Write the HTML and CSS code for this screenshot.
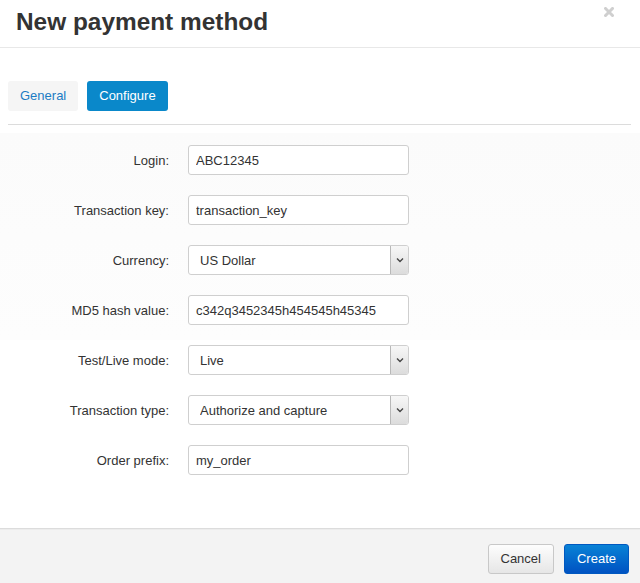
FILE: index.html
```html
<!DOCTYPE html>
<html lang="en">
<head>
<meta charset="utf-8">
<title>New payment method</title>
<link rel="stylesheet" href="styles.css">
</head>
<body>
<div class="modal">
  <div class="modal-header">
    <h1 class="modal-title">New payment method</h1>
    <span class="close" aria-label="Close">
      <svg width="10" height="10" viewBox="0 0 10 10"><path d="M1.5 1.5 L8.5 8.5 M8.5 1.5 L1.5 8.5" stroke="#cfcfcf" stroke-width="3" stroke-linecap="square"/></svg>
    </span>
  </div>
  <div class="modal-body">
    <div class="tabs">
      <button class="tab">General</button>
      <button class="tab tab-active">Configure</button>
    </div>
    <form class="form">
      <label class="label" for="f-login">Login:</label>
      <input class="input" id="f-login" type="text" value="ABC12345">

      <label class="label" for="f-key">Transaction key:</label>
      <input class="input" id="f-key" type="text" value="transaction_key">

      <label class="label" for="f-cur">Currency:</label>
      <div class="select">
        <select id="f-cur"><option>US Dollar</option></select>
        <span class="select-arrow"><svg width="8" height="6" viewBox="0 0 8 6"><path d="M1 1.5 L4 4.5 L7 1.5" fill="none" stroke="#444" stroke-width="1.4"/></svg></span>
      </div>

      <label class="label" for="f-md5">MD5 hash value:</label>
      <input class="input" id="f-md5" type="text" value="c342q3452345h454545h45345">

      <label class="label" for="f-mode">Test/Live mode:</label>
      <div class="select">
        <select id="f-mode"><option>Live</option></select>
        <span class="select-arrow"><svg width="8" height="6" viewBox="0 0 8 6"><path d="M1 1.5 L4 4.5 L7 1.5" fill="none" stroke="#444" stroke-width="1.4"/></svg></span>
      </div>

      <label class="label" for="f-type">Transaction type:</label>
      <div class="select">
        <select id="f-type"><option>Authorize and capture</option></select>
        <span class="select-arrow"><svg width="8" height="6" viewBox="0 0 8 6"><path d="M1 1.5 L4 4.5 L7 1.5" fill="none" stroke="#444" stroke-width="1.4"/></svg></span>
      </div>

      <label class="label" for="f-prefix">Order prefix:</label>
      <input class="input" id="f-prefix" type="text" value="my_order">
    </form>
  </div>
  <div class="modal-footer">
    <button class="btn btn-default">Cancel</button>
    <button class="btn btn-primary">Create</button>
  </div>
</div>
</body>
</html>
```

FILE: styles.css
```css
* { box-sizing: border-box; }
html, body {
  margin: 0;
  padding: 0;
  background: #fff;
  font-family: "Liberation Sans", Arial, sans-serif;
  color: #333;
}
.modal {
  width: 640px;
  height: 583px;
  display: flex;
  flex-direction: column;
  background: #fff;
}
.modal-header {
  position: relative;
  height: 48px;
  border-bottom: 1px solid #e8e8e8;
  padding: 0 16px;
}
.modal-title {
  margin: 0;
  padding-top: 8px;
  font-size: 24.4px;
  line-height: 28px;
  font-weight: bold;
  color: #333;
}
.close {
  position: absolute;
  top: 7px;
  right: 26px;
  width: 10px;
  height: 10px;
  display: block;
}
.close svg { display: block; }
.modal-body {
  flex: 1;
  padding-top: 33px;
}
.tabs {
  display: flex;
  gap: 9px;
  margin: 0 9px 0 8px;
  padding-bottom: 13px;
  border-bottom: 1px solid #dcdcdc;
}
.tab {
  height: 30px;
  padding: 0 12px;
  border: 0;
  border-radius: 3px;
  background: #f5f5f5;
  color: #1c7cc4;
  font-family: inherit;
  font-size: 13px;
  line-height: 30px;
}
.tab-active {
  background: #0a88ca;
  color: #fff;
}
.form {
  display: grid;
  grid-template-columns: 169px 221px;
  column-gap: 19px;
  row-gap: 20px;
  padding-top: 20px;
  align-items: center;
  background: linear-gradient(to bottom, #fff 0, #fff 8px, #fbfbfb 8px, #fdfdfd 215px, #fff 215px);
}
.label {
  text-align: right;
  font-size: 13px;
  color: #333;
}
.input, .select select {
  height: 30px;
  width: 221px;
  border: 1px solid #cfcfcf;
  border-radius: 3px;
  background: #fff;
  font-family: inherit;
  font-size: 13px;
  color: #333;
  padding: 0 7px;
  margin: 0;
  outline: none;
}
.select {
  position: relative;
  width: 221px;
  height: 30px;
}
.select select {
  display: block;
  appearance: none;
  -webkit-appearance: none;
  padding-left: 11px;
}
.select-arrow {
  position: absolute;
  top: 1px;
  right: 1px;
  bottom: 1px;
  width: 18px;
  border-left: 1px solid #b8b8b8;
  border-radius: 0 2px 2px 0;
  background: linear-gradient(to bottom, #f7f7f7, #dcdcdc);
  display: flex;
  align-items: center;
  justify-content: center;
  pointer-events: none;
}
.select-arrow svg { display: block; }
.modal-footer {
  height: 55px;
  border-top: 1px solid #dcdcdc;
  box-shadow: inset 0 1px 0 #ececec;
  background: #f3f3f3;
  display: flex;
  justify-content: flex-end;
  align-items: flex-start;
  gap: 10px;
  padding: 15px 11px 0 0;
}
.btn {
  height: 30px;
  padding: 0 12px;
  border-radius: 3px;
  font-family: inherit;
  font-size: 13px;
  line-height: 28px;
}
.btn-default {
  border: 1px solid #c8c8c8;
  background: linear-gradient(to bottom, #fdfdfd, #e6e6e6);
  color: #333;
}
.btn-primary {
  border: 1px solid #0058c0;
  background: linear-gradient(to bottom, #0882d6, #0052c2);
  color: #fff;
}
```
